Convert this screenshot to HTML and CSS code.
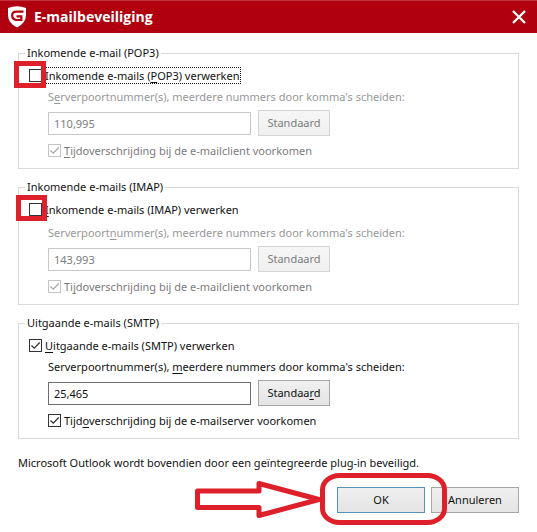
FILE: index.html
```html
<!DOCTYPE html>
<html lang="nl">
<head>
<meta charset="utf-8">
<title>E-mailbeveiliging</title>
<link rel="stylesheet" href="styles.css">
</head>
<body>
<header class="titlebar">
  <svg class="logo" viewBox="0 0 20 22" aria-hidden="true">
    <path fill="#fff" d="M1 2Q10 -1.600 19 2V9Q19 17 10 21.500Q1 17 1 9Z"/>
    <path fill="none" stroke="#b0000f" stroke-width="2.200" d="M16.500 5.600H9.500Q5.200 5.600 5.200 9.400T9.500 14H14.300V10.300H9.500"/>
  </svg>
  <h1 class="title">E-mailbeveiliging</h1>
  <button class="close" type="button" aria-label="Sluiten">
    <svg viewBox="0 0 14 14" aria-hidden="true"><path fill="none" stroke="#fff" stroke-width="2.300" d="M1 1L13 13M13 1L1 13"/></svg>
  </button>
</header>

<form class="dialog">
  <fieldset class="group">
    <legend>Inkomende e-mail (POP3)</legend>
    <div class="row">
      <input class="check" type="checkbox" id="pop3">
      <label class="check-label focused" for="pop3">Inkomende e-mails (<u>P</u>OP3) verwerken</label>
    </div>
    <div class="details disabled">
      <label class="port-label" for="pop3-port">S<u>e</u>rverpoortnummer(s), meerdere nummers door komma's scheiden:</label>
      <div class="port">
        <input class="text" type="text" id="pop3-port" value="110,995" disabled>
        <button class="button default" type="button" disabled>Standaard</button>
      </div>
      <div class="row">
        <input class="check" type="checkbox" id="pop3-timeout" checked disabled>
        <label class="check-label" for="pop3-timeout"><u>T</u>ijdoverschrijding bij de e-mailclient voorkomen</label>
      </div>
    </div>
  </fieldset>

  <fieldset class="group">
    <legend>Inkomende e-mails (IMAP)</legend>
    <div class="row">
      <input class="check" type="checkbox" id="imap">
      <label class="check-label" for="imap"><u>I</u>nkomende e-mails (IMAP) verwerken</label>
    </div>
    <div class="details disabled spaced">
      <label class="port-label" for="imap-port">Serverpoort<u>n</u>ummer(s), meerdere nummers door komma's scheiden:</label>
      <div class="port">
        <input class="text" type="text" id="imap-port" value="143,993" disabled>
        <button class="button default" type="button" disabled>Standaard</button>
      </div>
      <div class="row">
        <input class="check" type="checkbox" id="imap-timeout" checked disabled>
        <label class="check-label" for="imap-timeout">Ti<u>j</u>doverschrijding bij de e-mailclient voorkomen</label>
      </div>
    </div>
  </fieldset>

  <fieldset class="group">
    <legend>Uitgaande e-mails (SMTP)</legend>
    <div class="row">
      <input class="check" type="checkbox" id="smtp" checked>
      <label class="check-label" for="smtp"><u>U</u>itgaande e-mails (SMTP) verwerken</label>
    </div>
    <div class="details">
      <label class="port-label" for="smtp-port">Serverpoortnummer(s), <u>m</u>eerdere nummers door komma's scheiden:</label>
      <div class="port">
        <input class="text" type="text" id="smtp-port" value="25,465">
        <button class="button default" type="button">Standaa<u>r</u>d</button>
      </div>
      <div class="row">
        <input class="check" type="checkbox" id="smtp-timeout" checked>
        <label class="check-label" for="smtp-timeout">Tijd<u>o</u>verschrijding bij de e-mailserver voorkomen</label>
      </div>
    </div>
  </fieldset>

  <p class="note">Microsoft Outlook wordt bovendien door een geïntegreerde plug-in beveiligd.</p>

  <div class="actions">
    <button class="button primary" type="button">OK</button>
    <button class="button" type="button">Annuleren</button>
  </div>
</form>

<svg class="marks" width="537" height="532" viewBox="0 0 537 532" aria-hidden="true">
  <path d="M16.500 63.500H43.500V85.500H16.500ZM18.500 197.500H44.500V218.500H18.500Z"/>
  <path stroke-linejoin="round" d="M197.500 491H259V483.500L319 499.500L259 515.500V507.500H197.500Z"/>
  <rect x="322.500" y="475.500" width="122" height="47" rx="17" ry="14"/>
</svg>
</body>
</html>
```
FILE: styles.css
```css
* {
  box-sizing: border-box;
}

body {
  margin: 0;
  position: relative;
  min-height: 100vh;
  background: #fff;
  color: #111;
  font: 11px/18px "Noto Sans", "Open Sans", sans-serif;
}

.titlebar {
  display: flex;
  align-items: center;
  gap: 7px;
  height: 33px;
  padding: 0 11px 0 7px;
  border-top: 1px solid #c0323c;
  background: #b0000f;
  color: #fff;
}

.logo {
  width: 20px;
  height: 22px;
}

.title {
  flex: 1;
  margin: 0;
  font: 700 14px/20px "Open Sans", "Noto Sans", sans-serif;
}

.close {
  display: flex;
  padding: 0;
  border: 0;
  background: none;
}

.close svg {
  width: 14px;
  height: 14px;
}

.dialog {
  padding: 11px 18px 18px;
}

.group {
  min-width: 0;
  margin: 0;
  padding: 2px 10px 7px;
  border: 1px solid #d9d9d9;
}

.group + .group {
  margin-top: 9px;
}

legend {
  margin-left: -4px;
  padding: 0 2px;
}

.row {
  display: flex;
  align-items: center;
  gap: 2px;
  height: 22px;
}

.details {
  padding-left: 19px;
}

.details .row {
  margin-top: 3px;
}

.spaced {
  padding-top: 2px;
}

.disabled {
  color: #7c7c7c;
}

.disabled .port-label {
  color: #989898;
}

.check {
  appearance: none;
  flex: none;
  width: 13px;
  height: 13px;
  margin: 0;
  border: 1px solid #333;
  background: #fff;
}

.check:checked {
  background: url("data:image/svg+xml,%3Csvg xmlns='http://www.w3.org/2000/svg' viewBox='0 0 11 11'%3E%3Cpath d='M1.500 5.500L4.300 8.200L9.700 2.500' fill='none' stroke='%23333' stroke-width='1.300'/%3E%3C/svg%3E");
}

.check:disabled {
  border-color: #c4c4c4;
}

.check:checked:disabled {
  background: url("data:image/svg+xml,%3Csvg xmlns='http://www.w3.org/2000/svg' viewBox='0 0 11 11'%3E%3Cpath d='M1.500 5.500L4.300 8.200L9.700 2.500' fill='none' stroke='%23aaa' stroke-width='1.300'/%3E%3C/svg%3E");
}

.check-label {
  padding: 0 1px;
  line-height: 15px;
}

.focused {
  outline: 1px dotted #111;
}

u {
  text-underline-offset: 2px;
  text-decoration-skip-ink: none;
}

.port-label {
  display: block;
  padding: 2px 0 4px;
}

.port {
  display: flex;
  align-items: center;
  gap: 7px;
}

.text {
  width: 203px;
  height: 23px;
  padding: 0 5px;
  border: 1px solid #6e6e6e;
  background: #fff;
  color: inherit;
  font: inherit;
}

.text:disabled {
  border-color: #c8c8c8;
}

.button {
  width: 88px;
  height: 26px;
  padding: 0;
  border: 1px solid #a6a6a6;
  background: linear-gradient(#f0f0f0, #e4e4e4);
  color: #111;
  font: inherit;
}

.default {
  width: 72px;
}

.button:disabled {
  border-color: #d4d4d4;
  background: linear-gradient(#f6f6f6, #f0f0f0);
  color: #7c7c7c;
}

.primary {
  border-color: #5a91b8;
}

.note {
  margin: 15px 0;
}

.actions {
  display: flex;
  justify-content: flex-end;
  gap: 6px;
}

.marks {
  position: absolute;
  top: 0;
  left: 0;
  fill: none;
  stroke: #dd2029;
  stroke-width: 5;
  pointer-events: none;
}
```
